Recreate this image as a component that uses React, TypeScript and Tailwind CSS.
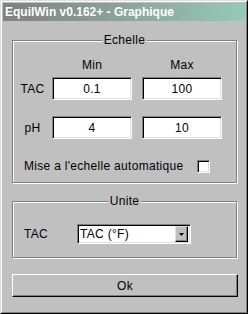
const sunken =
  'border border-t-[#808080] border-l-[#808080] border-b-white border-r-white shadow-[inset_1px_1px_0_#000,inset_-1px_-1px_0_#dfdfdf] bg-white'
const groupBox =
  'relative w-[225px] border border-[#808080] shadow-[inset_1px_1px_0_#fff,1px_1px_0_#fff]'

function Field({ value }: { value: string }) {
  return (
    <div className={`${sunken} w-[80px] h-[23px] flex items-center justify-center`}>
      {value}
    </div>
  )
}

function Legend({ children }: { children: string }) {
  return (
    <div className="absolute -top-[8px] left-0 right-0 flex justify-center">
      <span className="bg-[#c0c0c0] px-[2px] leading-[14px]">{children}</span>
    </div>
  )
}

function Row({ label, min, max }: { label: string; min: string; max: string }) {
  return (
    <div className="flex items-center gap-[10px]">
      <div className="w-[39px] -mr-[10px] text-center">{label}</div>
      <Field value={min} />
      <Field value={max} />
    </div>
  )
}

export default function App() {
  return (
    <div
      className="w-[248px] h-[314px] bg-[#c0c0c0] border border-t-[#dfdfdf] border-l-[#dfdfdf] border-b-black border-r-black text-black text-[12px] tracking-[0.3px]"
      style={{ fontFamily: '"Liberation Sans", Arial, sans-serif' }}
    >
      <div className="h-full border border-t-white border-l-white border-b-[#808080] border-r-[#808080] p-px">
        {/* Title bar */}
        <div className="h-[18px] bg-gradient-to-r from-[#808080] to-[#94cab7] flex items-center px-[2px]">
          <span className="text-white font-bold text-[12px] tracking-normal leading-none">
            EquilWin v0.162+ - Graphique
          </span>
        </div>

        <div className="pl-[9px]">
          {/* Echelle */}
          <div className={`${groupBox} mt-[19px] h-[143px]`}>
            <Legend>Echelle</Legend>
            <div className="flex gap-[10px] pt-[17px] pl-[39px] leading-[14px]">
              <div className="w-[80px] text-center">Min</div>
              <div className="w-[80px] text-center">Max</div>
            </div>
            <div className="mt-[5px]">
              <Row label="TAC" min="0.1" max="100" />
            </div>
            <div className="mt-[16px]">
              <Row label="pH" min="4" max="10" />
            </div>
            <div className="flex items-center mt-[20px] pl-[11px]">
              <span className="leading-[14px]">Mise a l'echelle automatique</span>
              <div className={`${sunken} w-[13px] h-[13px] ml-[14px]`} />
            </div>
          </div>

          {/* Unite */}
          <div className={`${groupBox} mt-[18px] h-[57px]`}>
            <Legend>Unite</Legend>
            <div className="flex items-center mt-[22px] pl-[11px]">
              <span className="w-[53px]">TAC</span>
              <div className={`${sunken} w-[114px] h-[20px] flex items-center justify-between pl-[2px] pr-[2px]`}>
                <span>TAC (°F)</span>
                <div className="w-[13px] h-[16px] bg-[#c0c0c0] border border-t-[#dfdfdf] border-l-[#dfdfdf] border-b-black border-r-black shadow-[inset_-1px_-1px_0_#808080] flex items-center justify-center">
                  <svg width="5" height="3" viewBox="0 0 5 3">
                    <path d="M0 0h5L2.5 3z" fill="#000" />
                  </svg>
                </div>
              </div>
            </div>
          </div>

          {/* Ok */}
          <button className="mt-[16px] w-[226px] h-[23px] bg-[#c0c0c0] border border-t-white border-l-white border-b-black border-r-black shadow-[inset_-1px_-1px_0_#808080] flex items-center justify-center">
            Ok
          </button>
        </div>
      </div>
    </div>
  )
}
